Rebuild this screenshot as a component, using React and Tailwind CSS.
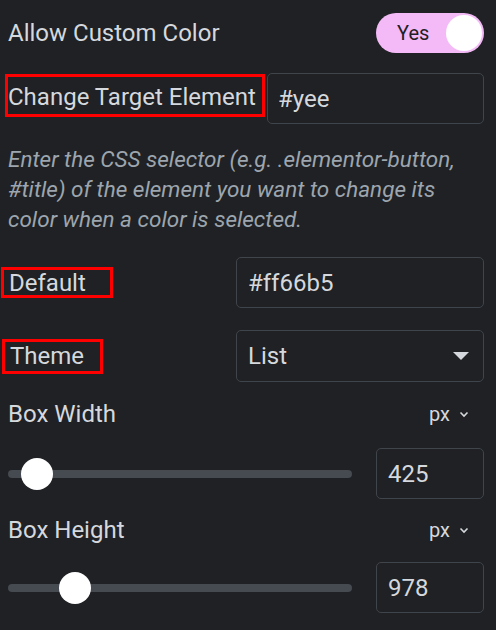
import React from 'react';

const font = { fontFamily: 'Roboto, "Liberation Sans", sans-serif' };

function Slider({ pos, value, top }) {
  return (
    <div className={`flex items-center ${top}`}>
      <div className="relative w-[344px] h-[8px] rounded-full bg-[#464a51]">
        <div
          className="absolute top-1/2 w-[32px] h-[32px] -translate-x-1/2 -translate-y-1/2 rounded-full bg-white"
          style={{ left: pos }}
        />
      </div>
      <div className="ml-[24px] w-[108px] h-[51px] rounded-[5px] border border-[#40444b] flex items-center pl-[11px] text-[24px] text-[#d5d8dc]">
        {value}
      </div>
    </div>
  );
}

function UnitLabel({ label }) {
  return (
    <div className="flex items-center justify-between h-[32px] text-[24px] leading-[32px] text-[#d5d8dc]">
      <span>{label}</span>
      <span className="flex items-center mr-[19px] text-[20px]">
        px
        <svg className="ml-[9px]" width="10" height="7" viewBox="0 0 10 7" fill="none">
          <path d="M1.5 1.5 L5 5 L8.5 1.5" stroke="#d5d8dc" strokeWidth="1.6" />
        </svg>
      </span>
    </div>
  );
}

export default function App() {
  return (
    <div className="w-[496px] h-[630px] bg-[#1f2124] px-[8px] pt-[13px] overflow-hidden" style={font}>
      {/* Allow custom color */}
      <div className="flex items-center justify-between h-[40px] pr-[4px]">
        <span className="text-[24px] text-[#d5d8dc]">Allow Custom Color</span>
        <div className="w-[108px] h-[40px] rounded-full bg-[#f3baf7] flex items-center justify-between pl-[21px] pr-[2px]">
          <span className="text-[20px] text-[#1f2124]">Yes</span>
          <div className="w-[36px] h-[36px] rounded-full bg-white" />
        </div>
      </div>

      {/* Change target element */}
      <div className="flex items-start mt-[20px] -ml-[3px] pr-[4px]">
        <div className="w-[260px] h-[43px] mt-px border-[3px] border-[#ff0000] flex items-center pt-[2px] text-[24px] text-[#d5d8dc] whitespace-nowrap">
          Change Target Element
        </div>
        <div className="flex-1 ml-[2px] h-[51px] rounded-[5px] border border-[#40444b] flex items-center pl-[10px] text-[24px] text-[#d5d8dc]">
          #yee
        </div>
      </div>

      <p className="mt-[20px] pr-[10px] text-[22.5px] leading-[30px] italic text-[#9da5ae]">
        Enter the CSS selector (e.g. .elementor-button, #title) of the element you want to change its color when a color is selected.
      </p>

      {/* Default */}
      <div className="flex items-center justify-between mt-[23px] pr-[4px]">
        <div className="-ml-[7px] w-[112px] h-[31px] border-[3px] border-[#ff0000] flex items-center text-[24px] text-[#d5d8dc] pl-[5px]">
          Default
        </div>
        <div className="w-[248px] h-[51px] rounded-[5px] border border-[#40444b] flex items-center pl-[11px] text-[24px] text-[#d5d8dc]">
          #ff66b5
        </div>
      </div>

      {/* Theme */}
      <div className="flex items-center justify-between mt-[22px] pr-[4px]">
        <div className="-ml-[6px] w-[101px] h-[35px] border-[3px] border-[#ff0000] flex items-center text-[24px] text-[#d5d8dc] pl-[5px]">
          Theme
        </div>
        <div className="w-[248px] h-[52px] rounded-[5px] border border-[#40444b] flex items-center justify-between pl-[11px] pr-[14px] text-[24px] text-[#d5d8dc]">
          <span>List</span>
          <svg width="16" height="8" viewBox="0 0 16 8">
            <path d="M0 0 H16 L8 8 Z" fill="#d5d8dc" />
          </svg>
        </div>
      </div>

      {/* Box width */}
      <div className="mt-[16px]">
        <UnitLabel label="Box Width" />
        <Slider pos="29px" value="425" top="mt-[18px]" />
      </div>

      {/* Box height */}
      <div className="mt-[15px]">
        <UnitLabel label="Box Height" />
        <Slider pos="67px" value="978" top="mt-[16px]" />
      </div>
    </div>
  );
}
